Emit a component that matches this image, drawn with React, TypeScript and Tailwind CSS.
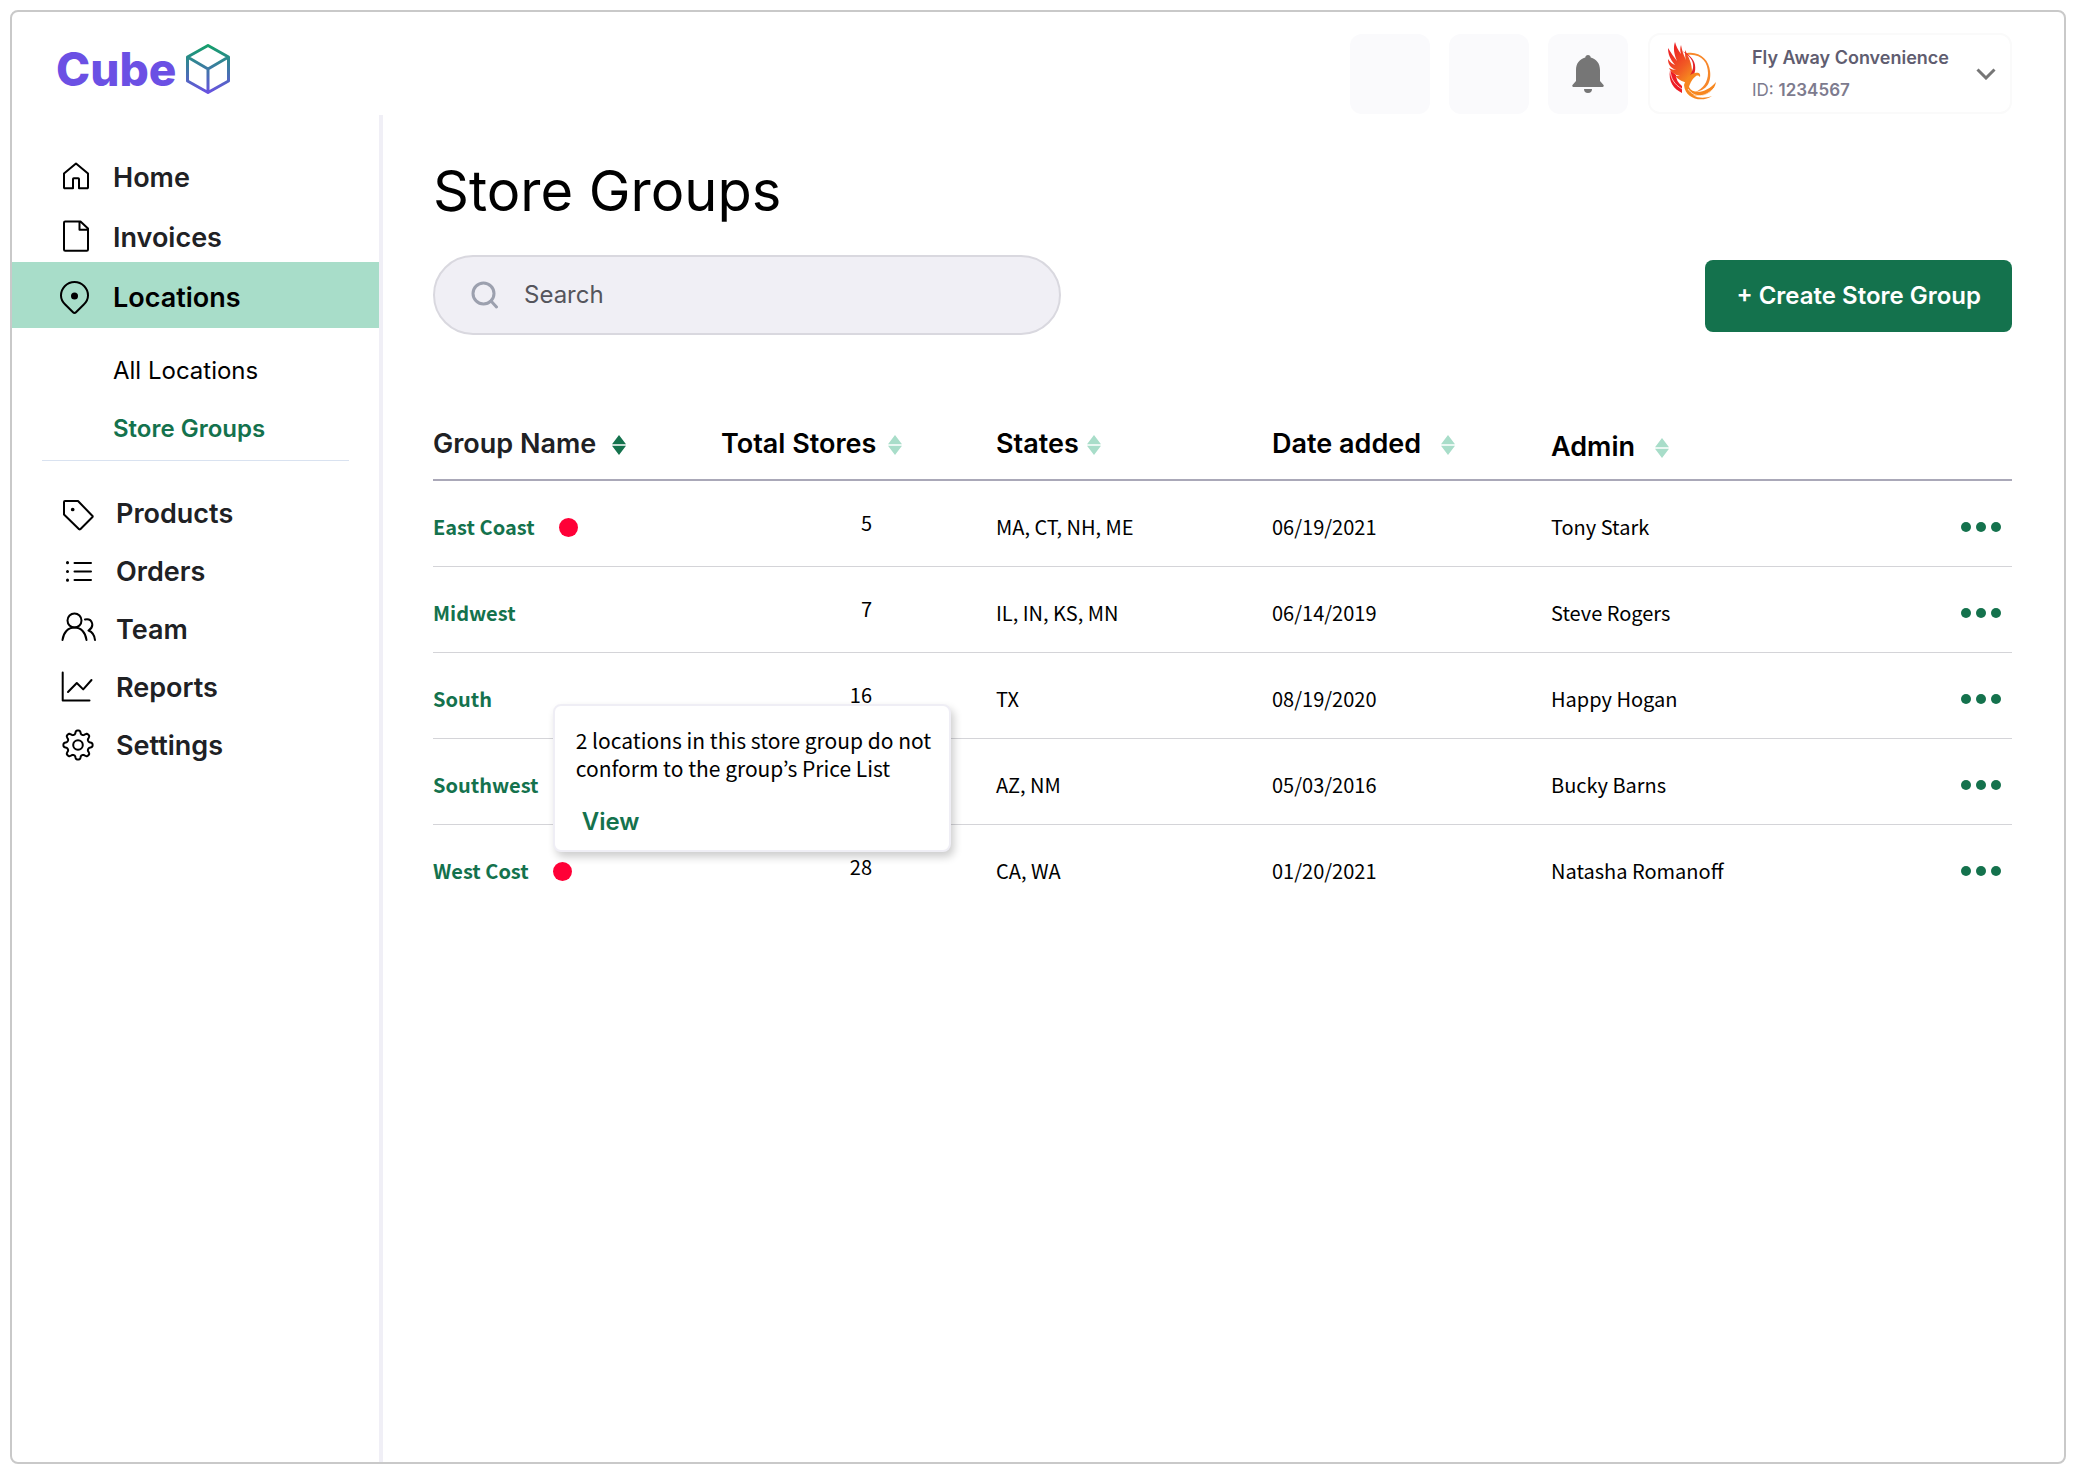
import type { ReactNode } from 'react';

type SubItem = { label: string; active?: boolean };
type NavEntry = { label: string; icon: ReactNode };
type Group = {
  name: string;
  stores?: number;
  states: string;
  added: string;
  admin: string;
  flagged?: boolean;
};

const GROUPS: Group[] = [
  { name: 'East Coast', stores: 5, states: 'MA, CT, NH, ME', added: '06/19/2021', admin: 'Tony Stark', flagged: true },
  { name: 'Midwest', stores: 7, states: 'IL, IN, KS, MN', added: '06/14/2019', admin: 'Steve Rogers' },
  { name: 'South', stores: 16, states: 'TX', added: '08/19/2020', admin: 'Happy Hogan' },
  { name: 'Southwest', states: 'AZ, NM', added: '05/03/2016', admin: 'Bucky Barns' },
  { name: 'West Cost', stores: 28, states: 'CA, WA', added: '01/20/2021', admin: 'Natasha Romanoff', flagged: true },
];

const SUB_ITEMS: SubItem[] = [{ label: 'All Locations' }, { label: 'Store Groups', active: true }];

// Eight rounded teeth around (18, 17)
const GEAR_POINTS = Array.from({ length: 128 }, (_, i) => {
  const a = (i / 128) * Math.PI * 2;
  const r = 12.8 + 1.9 * Math.tanh(1.8 * Math.cos(8 * a));
  return `${(18 + r * Math.cos(a)).toFixed(2)},${(17 + r * Math.sin(a)).toFixed(2)}`;
}).join(' ');

function Icon({ children }: { children: ReactNode }) {
  return (
    <svg
      viewBox="0 0 36 36"
      className="h-9 w-9 flex-shrink-0"
      fill="none"
      stroke="#000"
      strokeWidth={2}
      strokeLinecap="round"
      strokeLinejoin="round"
      aria-hidden="true"
    >
      {children}
    </svg>
  );
}

const TOP_NAV: NavEntry[] = [
  {
    label: 'Home',
    icon: (
      <Icon>
        <path d="M7 13.5 19 3.500l12 10V27.500a.8.8 0 0 1-.8.8H22V19a.8.8 0 0 0-.8-.8h-4.400a.8.8 0 0 0-.8.8v9.300H7.800a.8.8 0 0 1-.8-.8z" />
      </Icon>
    ),
  },
  {
    label: 'Invoices',
    icon: (
      <Icon>
        <path d="M8.200 1.500H23.500l7.500 7V29.500a1.200 1.200 0 0 1-1.200 1.200H8.200A1.200 1.200 0 0 1 7 29.500V2.700A1.200 1.200 0 0 1 8.200 1.500zM22.500 1.500v8.200H31" />
      </Icon>
    ),
  },
];

const BOTTOM_NAV: NavEntry[] = [
  {
    label: 'Products',
    icon: (
      <Icon>
        <path d="M5 5h13l14.500 15a.8.8 0 0 1 0 1L20.300 33.200a1 1 0 0 1-1.200 0L4 18.500V6a1 1 0 0 1 1-1z" />
        <circle cx="12.700" cy="13.500" r="1.100" fill="#000" strokeWidth={1.500} />
      </Icon>
    ),
  },
  {
    label: 'Orders',
    icon: (
      <Icon>
        <path d="M14.500 9h16.500M14.500 17.500h16.500M14.500 26h16.500" />
        <path d="M7.500 8.500v.2M7.500 17.400v.2M7.500 26v.2" strokeWidth={3} />
      </Icon>
    ),
  },
  {
    label: 'Team',
    icon: (
      <Icon>
        <circle cx="14.500" cy="8.500" r="7" />
        <path d="M2.500 28c.8-7.500 5.500-12.500 12-12.500S25.700 20.500 26.500 28M25 7.500c7.500-1.500 10 7 3.500 11 4 1.500 6 4.500 6.500 9.500" />
      </Icon>
    ),
  },
  {
    label: 'Reports',
    icon: (
      <Icon>
        <path d="M2.700 2.500V30.500H29.500M8 22l8.800-9 6.400 6.400L31.500 10" />
      </Icon>
    ),
  },
  {
    label: 'Settings',
    icon: (
      <Icon>
        <circle cx="18" cy="17" r="4.800" />
        <polygon points={GEAR_POINTS} />
      </Icon>
    ),
  },
];

function CubeMark() {
  return (
    <svg viewBox="0 0 44 50" className="h-[50px] w-11" fill="none" aria-hidden="true">
      <defs>
        <linearGradient id="cube" x1="22" y1="0" x2="22" y2="50" gradientUnits="userSpaceOnUse">
          <stop stopColor="#12a167" />
          <stop offset="1" stopColor="#6b50e4" />
        </linearGradient>
      </defs>
      <path
        d="M22 1.500 42.500 13v24L22 48.500 1.500 37V13zM1.500 13 22 25l20.500-12M22 25v23"
        stroke="url(#cube)"
        strokeWidth={3}
        strokeLinejoin="round"
      />
    </svg>
  );
}

function PhoenixMark() {
  return (
    <svg viewBox="0 0 60 70" className="h-[70px] w-[60px]" aria-hidden="true">
      <defs>
        <linearGradient id="wing" x1="6" y1="10" x2="34" y2="36" gradientUnits="userSpaceOnUse">
          <stop stopColor="#ed1c24" />
          <stop offset="0.600" stopColor="#f15a24" />
          <stop offset="1" stopColor="#f7931e" />
        </linearGradient>
      </defs>
      <path d="M25 16c14-2 21 7 21 18 0 9-5 16-13 19 15-2 16-14 15-21C47 21 38 12 25 14z" fill="#f7872a" />
      <path d="M8 31c-2 12 4 19 12 23v-7c-4-3-6-7-6-11z" fill="#ed1c24" />
      <path d="M13 3c-2 6-1 12 2 19-3-4-6-8-9-13 0 6 2 11 7 17-3-1-5-3-7-6 0 6 3 9 8 11-2 0-5-1-7-2 2 4 6 7 11 8h-5c4 4 8 6 13 7 1-4 4-6 4-11 0-9-3-14-7-22 0 4 0 7 1 10-3-6-4-10-5-15-1 3-1 6 0 9-3-4-5-8-6-12z" fill="url(#wing)" />
      <path d="M20 12c8 5 12 10 11 17-1 5-4 8-5 13 6-4 8-9 7-16-1-6-6-11-13-14z" fill="#e2232b" />
      <path d="M22 46c2-6 5-11 11-12 3-1 6 0 5 4-1-1-2-2-4-1-3 2-6 7-7 11 4 8 18 6 27-5-2 11-13 16-23 13 6 4 13 3 19 1-10 7-27 3-28-11z" fill="#f7871f" />
      <path d="M8 31c1 9 4 14 12 19M26 50c7 10 18 8 26-1" fill="none" stroke="#fff" strokeWidth={0.700} />
    </svg>
  );
}

function SortIcon({ active }: { active?: boolean }) {
  return (
    <svg viewBox="0 0 14 20" className="h-5 w-3.5 flex-shrink-0" fill={active ? '#14724d' : '#a8ddc9'} aria-hidden="true">
      <path d="M7 0l7 9.200H0zM7 20l7-9.200H0z" />
    </svg>
  );
}

function NavLink({ item }: { item: NavEntry }) {
  return (
    <a href="#" className="flex items-center gap-5">
      {item.icon}
      <span>{item.label}</span>
    </a>
  );
}

function Header() {
  return (
    <header className="flex h-[103px] items-start justify-between pr-[52px] pl-11">
      <a href="#" className="flex items-center gap-2.5 pt-8" aria-label="Cube">
        <span className="text-[46px] leading-[50px] font-extrabold text-[#6b50e4]">Cube</span>
        <CubeMark />
      </a>
      <div className="flex items-center gap-5 pt-[21px]">
        <div className="flex gap-[19px]">
          <button aria-label="Shortcut one" className="h-20 w-20 rounded-xl bg-[#fafafc]" />
          <button aria-label="Shortcut two" className="h-20 w-20 rounded-xl bg-[#fafafc]" />
          <button aria-label="Notifications" className="flex h-20 w-20 items-center justify-center rounded-xl bg-[#fafafc]">
            <svg viewBox="0 0 32 38" className="h-[38px] w-8" fill="#767676" aria-hidden="true">
              <path d="M16 0c1.600 0 2.600 1.200 2.700 2.600C24.500 4 28 8.800 28 15v11l3.500 4c.6.900.2 2-.9 2H1.400c-1.100 0-1.500-1.100-.9-2L4 26V15C4 8.800 7.500 4 13.300 2.600 13.400 1.200 14.400 0 16 0zM12 34h8a4 4 0 0 1-8 0z" />
            </svg>
          </button>
        </div>
        <button className="flex h-[81px] w-[364px] items-center rounded-xl border-2 border-[#fafafa] pr-3.5 pl-3 text-left">
          <PhoenixMark />
          <span className="ml-[30px] flex-1 text-lg leading-8 font-semibold whitespace-nowrap text-[#5f5d70]">
            <span className="block">Fly Away Convenience</span>
            <span className="block text-[17px] text-[#7d7b8e]">
              <span className="font-normal">ID: </span>1234567
            </span>
          </span>
          <svg viewBox="0 0 20 12" className="h-3 w-5" fill="none" stroke="#767676" strokeWidth={3} aria-hidden="true">
            <path d="M1.500 1.500 10 10l8.500-8.500" />
          </svg>
        </button>
      </div>
    </header>
  );
}

function Sidebar() {
  return (
    <nav className="w-[371px] flex-shrink-0 border-r-4 border-[#f0eff6] pt-[39px] text-[27px] font-semibold text-[#202124]">
      <ul className="flex flex-col gap-3 pl-[45px]">
        {TOP_NAV.map((item) => (
          <li key={item.label} className="flex h-12 items-center">
            <NavLink item={item} />
          </li>
        ))}
      </ul>
      <a href="#" className="flex h-[66px] items-center gap-5 bg-[#a8ddc9] pt-1.5 pl-[45px] text-black">
        <Icon>
          <path d="M17.500 2a13.500 13.500 0 0 1 13.500 13.500c0 4-1.600 6.500-4.200 9l-7.800 7.800c-1 1-2 1-3 0l-7.800-7.800c-2.600-2.500-4.200-5-4.200-9A13.500 13.500 0 0 1 17.500 2z" />
          <circle cx="17.500" cy="16" r="3.500" fill="#000" stroke="none" />
        </Icon>
        <span>Locations</span>
      </a>
      <ul className="mx-[30px] border-b border-[#d9e2f0] pt-3.5 pb-0.5 pl-[71px] text-2xl">
        {SUB_ITEMS.map((item) => (
          <li key={item.label} className="flex h-[58px] items-center">
            <a href="#" className={item.active ? 'text-[#14724d]' : 'font-normal text-black'}>
              {item.label}
            </a>
          </li>
        ))}
      </ul>
      <ul className="pt-6 pl-12">
        {BOTTOM_NAV.map((item) => (
          <li key={item.label} className="flex h-[58px] items-center">
            <NavLink item={item} />
          </li>
        ))}
      </ul>
    </nav>
  );
}

function PriceListNotice() {
  return (
    <div
      role="tooltip"
      className="absolute bottom-full left-0 z-10 mb-2.5 w-[398px] rounded-lg border-2 border-[#efeef5] bg-white px-[21px] pt-5 pb-2 text-left font-normal text-black shadow-[3px_5px_8px_rgba(0,0,0,0.2)]"
    >
      <p className="text-[21px] leading-7 whitespace-nowrap">
        2 locations in this store group do not
        <br />
        conform to the group’s Price List
      </p>
      <a href="#" className="mt-5 ml-1.5 block font-[Inter,sans-serif] text-2xl leading-10 font-semibold text-[#14724d]">
        View
      </a>
    </div>
  );
}

function GroupsTable() {
  return (
    <table className="mt-[77px] w-full table-fixed border-collapse text-left">
      <colgroup>
        <col className="w-[288px]" />
        <col className="w-[275px]" />
        <col className="w-[276px]" />
        <col className="w-[279px]" />
        <col className="w-[280px]" />
        <col />
      </colgroup>
      <thead>
        <tr className="h-[68px] border-b-2 border-[#aaa8b8] text-[27px] text-black">
          <th className="p-0 pb-0.5 font-semibold text-[#202124]" aria-sort="ascending">
            <button className="flex items-center gap-4">Group Name <SortIcon active /></button>
          </th>
          <th className="p-0 pb-0.5 font-semibold">
            <button className="flex items-center gap-3">Total Stores <SortIcon /></button>
          </th>
          <th className="p-0 pb-0.5 font-semibold">
            <button className="flex items-center gap-2">States <SortIcon /></button>
          </th>
          <th className="p-0 pb-0.5 font-semibold">
            <button className="flex items-center gap-5">Date added <SortIcon /></button>
          </th>
          <th className="p-0 pt-1 font-semibold">
            <button className="flex items-center gap-5">Admin <SortIcon /></button>
          </th>
          <th className="p-0" aria-label="Actions" />
        </tr>
      </thead>
      <tbody className="font-['Noto_Sans_CJK_KR',sans-serif] text-xl text-black">
        {GROUPS.map((group, i) => (
          <tr key={group.name} className="h-[86px] border-b border-[#d4d4d8] last:border-0">
            <td className="p-0 pt-2 font-bold text-[#14724d]">
              <div className="flex items-center gap-6">
                <a href="#">{group.name}</a>
                {group.flagged && (
                  <span className="relative h-[19px] w-[19px] rounded-full bg-[#ff0037]">
                    {i === GROUPS.length - 1 && <PriceListNotice />}
                  </span>
                )}
              </div>
            </td>
            <td className="p-0 pr-[124px] text-right">{group.stores}</td>
            <td className="p-0 pt-2">{group.states}</td>
            <td className="p-0 pt-2">{group.added}</td>
            <td className="p-0 pt-2">{group.admin}</td>
            <td className="p-0 pt-2 pr-[11px]">
              <button className="ml-auto flex gap-[5px]" aria-label={`Actions for ${group.name}`}>
                <span className="h-2.5 w-2.5 rounded-full bg-[#14724d]" />
                <span className="h-2.5 w-2.5 rounded-full bg-[#14724d]" />
                <span className="h-2.5 w-2.5 rounded-full bg-[#14724d]" />
              </button>
            </td>
          </tr>
        ))}
      </tbody>
    </table>
  );
}

export default function App() {
  return (
    <div className="min-h-screen bg-white p-2.5 pb-2 font-[Inter,sans-serif]">
      <div className="flex min-h-[calc(100vh-18px)] flex-col rounded-lg border-2 border-[#c9c9c9]">
        <Header />
        <div className="flex flex-1">
          <Sidebar />
          <main className="min-w-0 flex-1 pt-10 pr-[52px] pl-[50px]">
            <h1 className="text-[56px] leading-[72px] font-normal text-black">Store Groups</h1>
            <div className="mt-7 flex items-center justify-between">
              <label className="flex h-20 w-[628px] items-center gap-[25px] rounded-full border-2 border-[#d9d8df] bg-[#f0eff5] pl-9">
                <svg viewBox="0 0 28 28" className="h-7 w-7" fill="none" stroke="#9ca0ae" strokeWidth={3} strokeLinecap="round" aria-hidden="true">
                  <circle cx="12.500" cy="12.500" r="10.500" />
                  <path d="m20 20 5.500 6" />
                </svg>
                <input
                  type="search"
                  aria-label="Search"
                  placeholder="Search"
                  className="min-w-0 flex-1 bg-transparent pr-8 text-2xl outline-none placeholder:text-[#55555c]"
                />
              </label>
              <button className="mt-0.5 h-[72px] rounded-lg bg-[#14724d] px-[31px] text-2xl font-semibold text-white">
                + Create Store Group
              </button>
            </div>
            <GroupsTable />
          </main>
        </div>
      </div>
    </div>
  );
}
